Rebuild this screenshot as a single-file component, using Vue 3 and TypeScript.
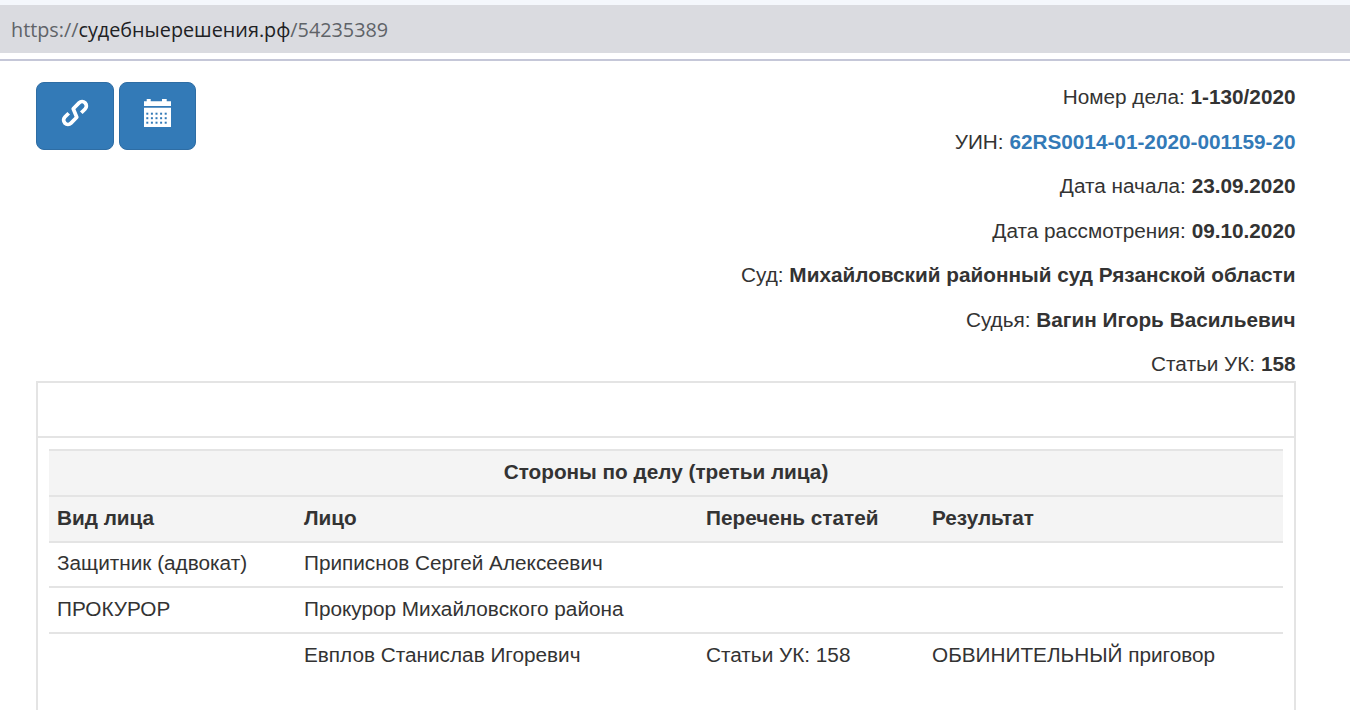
<script setup lang="ts">
interface InfoRow { label: string; value: string; link?: boolean }
const info: InfoRow[] = [
  { label: 'Номер дела:', value: '1-130/2020' },
  { label: 'УИН:', value: '62RS0014-01-2020-001159-20', link: true },
  { label: 'Дата начала:', value: '23.09.2020' },
  { label: 'Дата рассмотрения:', value: '09.10.2020' },
  { label: 'Суд:', value: 'Михайловский районный суд Рязанской области' },
  { label: 'Судья:', value: 'Вагин Игорь Васильевич' },
  { label: 'Статьи УК:', value: '158' },
]
const rows: string[][] = [
  ['Защитник (адвокат)', 'Приписнов Сергей Алексеевич', '', ''],
  ['ПРОКУРОР', 'Прокурор Михайловского района', '', ''],
  ['', 'Евплов Станислав Игоревич', 'Статьи УК: 158', 'ОБВИНИТЕЛЬНЫЙ приговор'],
]
const dots: number[][] = []
for (const y of [14.7, 19.2, 23.7]) for (const x of [3.3, 7.9, 12.5, 17.1, 21.7]) dots.push([x, y])
</script>

<template>
  <div class="page">
    <header class="chrome">
      <div class="address">
        <span class="dim">https://</span><span class="host">судебныерешения.рф</span><span class="dim">/54235389</span>
      </div>
    </header>
    <main class="content">
      <section class="top">
        <div class="buttons">
          <button class="btn btn-link" type="button" aria-label="Ссылка">
            <svg width="32" height="32" viewBox="-16 -16 32 32" fill="none">
              <path
                transform="rotate(-45)"
                stroke="#fff"
                stroke-width="3.7"
                stroke-linejoin="round"
                d="M4.6 4.3H10A4.3 4.3 0 0 0 10 -4.3H1.8L-1.8 4.3H-10A4.3 4.3 0 0 1 -10 -4.3H-4.6"
              />
            </svg>
          </button>
          <button class="btn btn-cal" type="button" aria-label="Календарь">
            <svg width="27" height="28" viewBox="0 0 27 28">
              <path fill="#fff" d="M0 2.3h2.7V0h4v2.3H18V0h4.7v2.3H27V7H0zM0 8.7h27V28H0z" />
              <rect v-for="(d, i) in dots" :key="i" :x="d[0] - 1" :y="d[1] - 1" width="2" height="2" fill="#337ab7" />
            </svg>
          </button>
        </div>
        <div class="info">
          <p v-for="row in info" :key="row.label">
            {{ row.label }} <b :class="{ accent: row.link }">{{ row.value }}</b>
          </p>
        </div>
      </section>
      <section class="panel">
        <div class="panel-head"></div>
        <div class="panel-body">
          <table>
            <colgroup>
              <col class="c1" /><col class="c2" /><col class="c3" /><col class="c4" />
            </colgroup>
            <thead>
              <tr><th colspan="4" class="title">Стороны по делу (третьи лица)</th></tr>
              <tr><th>Вид лица</th><th>Лицо</th><th>Перечень статей</th><th>Результат</th></tr>
            </thead>
            <tbody>
              <tr v-for="(row, i) in rows" :key="i">
                <td v-for="(cell, j) in row" :key="j">{{ cell }}</td>
              </tr>
            </tbody>
          </table>
        </div>
      </section>
    </main>
  </div>
</template>

<style scoped>
.page {
  height: 710px;
  overflow: hidden;
  background: #fff;
  font-family: "Liberation Sans", Arial, sans-serif;
  font-size: 20.75px;
  color: #333;
}
.chrome {
  padding-top: 5px;
  height: 61px;
  box-sizing: border-box;
  border-bottom: 2px solid #c5c7d8;
  background-image: linear-gradient(#f4f7fc 0 5px, #dadbe0 5px 53px, #fff 53px);
}
.address {
  height: 48px;
  display: flex;
  align-items: center;
  padding-left: 11px;
  font-family: "Open Sans", "Noto Sans", sans-serif;
  font-size: 19.8px;
}
.dim { color: #5f6368; }
.host { color: #202124; }
.content { padding: 0 54px 0 36px; }
.top {
  display: flex;
  justify-content: space-between;
  height: 320px;
}
.buttons {
  display: flex;
  gap: 5px;
  padding-top: 21px;
  align-items: flex-start;
}
.btn {
  height: 68px;
  background: #337ab7;
  border: 1px solid #2e6da4;
  border-radius: 8px;
  padding: 0;
  display: flex;
  align-items: center;
  justify-content: center;
}
.btn svg { display: block; }
.btn-link svg { margin-top: -7px; }
.btn-cal svg { margin-top: -6px; }
.btn-link { width: 78px; }
.btn-cal { width: 77px; }
.info { padding-top: 23px; padding-right: 0.5px; text-align: right; flex: 1; }
.info p {
  margin: 0;
  line-height: 26px;
}
.info p + p { margin-top: 18.5px; }
.accent { color: #337ab7; }
.panel {
  border: 2px solid #e4e4e4;
  height: 400px;
  box-sizing: border-box;
}
.panel-head {
  height: 55px;
  border-bottom: 2px solid #e4e4e4;
  box-sizing: border-box;
}
.panel-body { padding: 11px 11px 0; }
table {
  width: 100%;
  border-collapse: separate;
  border-spacing: 0;
  table-layout: fixed;
}
.c1 { width: 247px; }
.c2 { width: 402px; }
.c3 { width: 226px; }
th, td {
  height: 45.8px;
  padding: 0 8px 2px;
  box-sizing: border-box;
  text-align: left;
  vertical-align: middle;
  line-height: 26px;
  border-top: 2px solid #e4e4e4;
}
th { background: #f4f4f4; font-weight: 700; }
th.title { text-align: center; }
</style>
